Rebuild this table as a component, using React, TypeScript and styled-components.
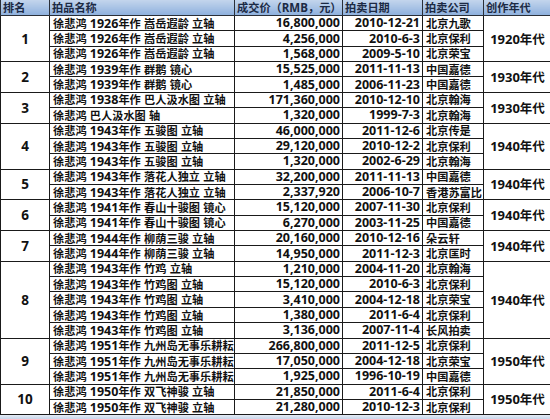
import React, { FC } from 'react';
import styled, { createGlobalStyle } from 'styled-components';

type Sale = { name: string; price: string; date: string; house: string };
type Group = { rank: number; era: string; sales: Sale[] };

const groups: Group[] = [
    {
        rank: 1,
        era: '1920年代',
        sales: [
            { name: '徐悲鸿 1926年作 嵩岳遐龄 立轴', price: '16,800,000', date: '2010-12-21', house: '北京九歌' },
            { name: '徐悲鸿 1926年作 嵩岳遐龄 立轴', price: '4,256,000', date: '2010-6-3', house: '北京保利' },
            { name: '徐悲鸿 1926年作 嵩岳遐龄 立轴', price: '1,568,000', date: '2009-5-10', house: '北京荣宝' },
        ],
    },
    {
        rank: 2,
        era: '1930年代',
        sales: [
            { name: '徐悲鸿 1939年作 群鹅 镜心', price: '15,525,000', date: '2011-11-13', house: '中国嘉德' },
            { name: '徐悲鸿 1939年作 群鹅 镜心', price: '1,485,000', date: '2006-11-23', house: '中国嘉德' },
        ],
    },
    {
        rank: 3,
        era: '1930年代',
        sales: [
            { name: '徐悲鸿 1938年作 巴人汲水图 立轴', price: '171,360,000', date: '2010-12-10', house: '北京翰海' },
            { name: '徐悲鸿 巴人汲水图 轴', price: '1,320,000', date: '1999-7-3', house: '北京翰海' },
        ],
    },
    {
        rank: 4,
        era: '1940年代',
        sales: [
            { name: '徐悲鸿 1943年作 五骏图 立轴', price: '46,000,000', date: '2011-12-6', house: '北京传是' },
            { name: '徐悲鸿 1943年作 五骏图 立轴', price: '29,120,000', date: '2010-12-2', house: '北京保利' },
            { name: '徐悲鸿 1943年作 五骏图 立轴', price: '1,320,000', date: '2002-6-29', house: '北京翰海' },
        ],
    },
    {
        rank: 5,
        era: '1940年代',
        sales: [
            { name: '徐悲鸿 1943年作 落花人独立 立轴', price: '32,200,000', date: '2011-11-13', house: '中国嘉德' },
            { name: '徐悲鸿 1943年作 落花人独立 立轴', price: '2,337,920', date: '2006-10-7', house: '香港苏富比' },
        ],
    },
    {
        rank: 6,
        era: '1940年代',
        sales: [
            { name: '徐悲鸿 1941年作 春山十骏图 镜心', price: '15,120,000', date: '2007-11-30', house: '北京保利' },
            { name: '徐悲鸿 1941年作 春山十骏图 镜心', price: '6,270,000', date: '2003-11-25', house: '中国嘉德' },
        ],
    },
    {
        rank: 7,
        era: '1940年代',
        sales: [
            { name: '徐悲鸿 1944年作 柳荫三骏 立轴', price: '20,160,000', date: '2010-12-16', house: '朵云轩' },
            { name: '徐悲鸿 1944年作 柳荫三骏 立轴', price: '14,950,000', date: '2011-12-3', house: '北京匡时' },
        ],
    },
    {
        rank: 8,
        era: '1940年代',
        sales: [
            { name: '徐悲鸿 1943年作 竹鸡 立轴', price: '1,210,000', date: '2004-11-20', house: '北京翰海' },
            { name: '徐悲鸿 1943年作 竹鸡图 立轴', price: '15,120,000', date: '2010-6-3', house: '北京保利' },
            { name: '徐悲鸿 1943年作 竹鸡图 立轴', price: '3,410,000', date: '2004-12-18', house: '北京荣宝' },
            { name: '徐悲鸿 1943年作 竹鸡图 立轴', price: '1,380,000', date: '2011-6-4', house: '北京保利' },
            { name: '徐悲鸿 1943年作 竹鸡图 立轴', price: '3,136,000', date: '2007-11-4', house: '长风拍卖' },
        ],
    },
    {
        rank: 9,
        era: '1950年代',
        sales: [
            { name: '徐悲鸿 1951年作 九州岛无事乐耕耘', price: '266,800,000', date: '2011-12-5', house: '北京保利' },
            { name: '徐悲鸿 1951年作 九州岛无事乐耕耘', price: '17,050,000', date: '2004-12-18', house: '北京荣宝' },
            { name: '徐悲鸿 1951年作 九州岛无事乐耕耘', price: '1,925,000', date: '1996-10-19', house: '中国嘉德' },
        ],
    },
    {
        rank: 10,
        era: '1950年代',
        sales: [
            { name: '徐悲鸿 1950年作 双飞神骏 立轴', price: '21,850,000', date: '2011-6-4', house: '北京保利' },
            { name: '徐悲鸿 1950年作 双飞神骏 立轴', price: '21,280,000', date: '2010-12-3', house: '北京保利' },
        ],
    },
];

// Chinese runs are set a touch smaller than the Latin digits, as in the sheet
const mixed = (text: string) =>
    text
        .split(/([\u3000-\u9fff\uff00-\uffef]+)/)
        .map((part, i) => (i % 2 ? <Han key={i}>{part}</Han> : part));

const App: FC = () => (
    <>
        <GlobalStyle />
        <Sheet>
            <Table>
                <colgroup>
                    <col style={{ width: 49 }} />
                    <col style={{ width: 185 }} />
                    <col style={{ width: 108 }} />
                    <col style={{ width: 80 }} />
                    <col style={{ width: 61 }} />
                    <col style={{ width: 68 }} />
                </colgroup>
                <thead>
                    <tr>
                        <HeadCell>{mixed('排名')}</HeadCell>
                        <HeadCell>{mixed('拍品名称')}</HeadCell>
                        <HeadCell>{mixed('成交价（RMB，元）')}</HeadCell>
                        <HeadCell>{mixed('拍卖日期')}</HeadCell>
                        <HeadCell>{mixed('拍卖公司')}</HeadCell>
                        <HeadCell>{mixed('创作年代')}</HeadCell>
                    </tr>
                </thead>
                <tbody>
                    {groups.map((group) =>
                        group.sales.map((sale, i) => (
                            <Row key={`${group.rank}-${i}`}>
                                {i === 0 && (
                                    <MergedCell rowSpan={group.sales.length} $big>
                                        {group.rank}
                                    </MergedCell>
                                )}
                                <Cell>{mixed(sale.name)}</Cell>
                                <Cell $right>{sale.price}</Cell>
                                <Cell $right>{sale.date}</Cell>
                                <Cell>{mixed(sale.house)}</Cell>
                                {i === 0 && (
                                    <MergedCell rowSpan={group.sales.length}>
                                        {mixed(group.era)}
                                    </MergedCell>
                                )}
                            </Row>
                        )),
                    )}
                </tbody>
            </Table>
            <NextStrip />
        </Sheet>
    </>
);

const GlobalStyle = createGlobalStyle`
    html, body {
        margin: 0;
        padding: 0;
        background: #ffffff;
    }

    body {
        font-family: 'Open Sans', 'Noto Sans CJK SC', sans-serif;
        color: #111111;
    }
`;

const Sheet = styled.div`
    width: 550px;
    height: 419px;
    overflow: hidden;
    display: flex;
    flex-direction: column;
`;

const Table = styled.table`
    width: 551px;
    table-layout: fixed;
    border-collapse: collapse;
    flex-shrink: 0;
`;

const Han = styled.span`
    font-family: 'Noto Sans CJK SC', sans-serif;
    font-size: 11.2px;
    line-height: 12px;
`;

const HeadCell = styled.th`
    height: 15px;
    padding: 0 0 0 2px;
    text-align: left;
    vertical-align: middle;
    font-size: 11.5px;
    font-weight: 700;
    line-height: 12px;
    color: #1c2a44;
    white-space: nowrap;
    overflow: hidden;
    background: linear-gradient(#c3d5ec, #8fb1de);
    border: 1px solid #2a2f38;
    border-top: none;

    ${Han} {
        font-size: 11.2px;
    }
`;

const Row = styled.tr`
    height: 15.37px;
`;

const Cell = styled.td<{ $right?: boolean }>`
    padding: 0 ${({ $right }) => ($right ? '2px' : '0')} 0 ${({ $right }) => ($right ? '0' : '3px')};
    text-align: ${({ $right }) => ($right ? 'right' : 'left')};
    font-size: 12.5px;
    font-weight: 700;
    line-height: 12px;
    white-space: nowrap;
    overflow: hidden;
    border: 1px solid #1a1a1a;
`;

const MergedCell = styled.td<{ $big?: boolean }>`
    padding: 0;
    text-align: center;
    vertical-align: middle;
    font-size: ${({ $big }) => ($big ? '13.5px' : '13px')};
    font-weight: 700;
    line-height: 14px;
    white-space: nowrap;
    border: 1px solid #1a1a1a;

    ${Han} {
        font-size: 12.5px;
        line-height: 14px;
    }
`;

const NextStrip = styled.div`
    flex: 1;
    background: linear-gradient(#e4ebf5, #c9d6ea);
`;

export default App;
